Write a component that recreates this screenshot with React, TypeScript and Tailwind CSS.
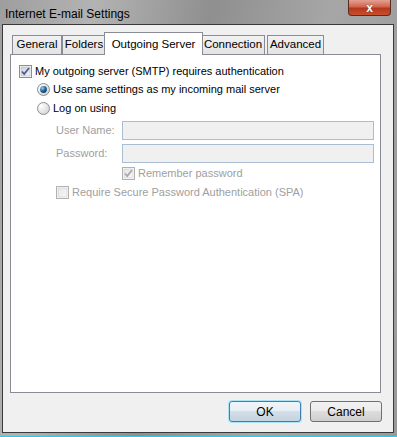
import React from 'react';

const font = { fontFamily: '"Liberation Sans", Arial, sans-serif' };

const CheckBox: React.FC<{ checked?: boolean; disabled?: boolean }> = ({ checked, disabled }) => (
    <svg width="13" height="13" viewBox="0 0 13 13" className="shrink-0">
        <defs>
            <linearGradient id={disabled ? 'cbd' : 'cbe'} x1="0" y1="0" x2="1" y2="1">
                <stop offset="0" stopColor={disabled ? '#e6e6e6' : '#cbcfd5'} />
                <stop offset="1" stopColor={disabled ? '#f7f7f7' : '#f6f6f6'} />
            </linearGradient>
        </defs>
        <rect x="0.5" y="0.5" width="12" height="12" fill="#fff" stroke={disabled ? '#b1b1b1' : '#8e8f8f'} />
        <rect x="2" y="2" width="9" height="9" fill={`url(#${disabled ? 'cbd' : 'cbe'})`} stroke={disabled ? '#c8c8c8' : '#aeb3b9'} strokeWidth="0.6" />
        {checked && (
            <path d="M3 6.5 L5.2 9 L10 3" fill="none" stroke={disabled ? '#a8a8a8' : '#4a5f97'} strokeWidth="1.8" />
        )}
    </svg>
);

const Radio: React.FC<{ checked?: boolean }> = ({ checked }) => (
    <svg width="13" height="13" viewBox="0 0 13 13" className="shrink-0">
        <defs>
            <radialGradient id="rbg" cx="0.3" cy="0.3" r="0.9">
                <stop offset="0" stopColor="#ffffff" />
                <stop offset="1" stopColor="#c9cdd2" />
            </radialGradient>
            <radialGradient id="rdot" cx="0.35" cy="0.3" r="0.8">
                <stop offset="0" stopColor="#8fd0f3" />
                <stop offset="0.6" stopColor="#1b5a8f" />
                <stop offset="1" stopColor="#0b3a63" />
            </radialGradient>
        </defs>
        <circle cx="6.5" cy="6.5" r="6" fill="url(#rbg)" stroke="#8f8f8f" />
        {checked && <circle cx="6.5" cy="6.5" r="3.4" fill="url(#rdot)" />}
    </svg>
);

const Tab: React.FC<{ label: string; w: string; selected?: boolean }> = ({ label, w, selected }) =>
    selected ? (
        <div className={`${w} -mx-[2px] h-[23px] -mb-px relative z-10 bg-white border border-b-0 border-[#898c95] flex items-start justify-center pt-[3px] text-[11.5px] text-black`}>
            {label}
        </div>
    ) : (
        <div className={`${w} h-[19px] border border-b-0 border-[#898c95] bg-[linear-gradient(#f2f2f2,#e3e3e3)] flex items-center justify-center text-[11.5px] text-black`}>
            {label}
        </div>
    );

const App: React.FC = () => {
    return (
        <div
            className="w-[397px] h-[437px] flex flex-col bg-[linear-gradient(100deg,#9e9e9e_0%,#b3b3b3_20%,#8f8f8f_45%,#a6a6a6_70%,#9a9a9a_100%)] border-b border-[#35c6e9]"
            style={font}
        >
            <div className="h-[24px] flex items-start justify-between shrink-0">
                <div className="pl-[5px] pt-[5px] text-[12px] text-black">Internet E-mail Settings</div>
                <div className="mr-[6px] w-[43px] h-[16px] rounded-b-[4px] border border-t-0 border-[#5a2a22] bg-[linear-gradient(#e5a093_0%,#d0654e_45%,#b8361c_55%,#c8502f_100%)] flex items-center justify-center">
                    <span className="text-[12px] font-bold text-white leading-none [text-shadow:0_0_1px_#333]">x</span>
                </div>
            </div>
            <div className="flex-1 ml-[2px] mr-[3px] mb-[3px] border border-[#3a3a3a] bg-[#f0f0f0] flex flex-col px-[7px] pt-[9px] pb-[10px]">
                <div className="flex items-end pl-[2px] h-[20px]">
                    <Tab label="General" w="w-[50px]" />
                    <Tab label="Folders" w="w-[44px]" />
                    <Tab label="Outgoing Server" w="w-[99px]" selected />
                    <Tab label="Connection" w="w-[64px]" />
                    <div className="w-[2px]" />
                    <Tab label="Advanced" w="w-[57px]" />
                </div>
                <div className="w-[371px] h-[339px] border border-[#898c95] bg-white flex flex-col text-[11px] text-black">
                    <div className="h-[18px] mt-[7px] pl-[8px] flex items-center gap-[3px]">
                        <CheckBox checked />
                        <span>My outgoing server (SMTP) requires authentication</span>
                    </div>
                    <div className="h-[18px] pl-[26px] flex items-center gap-[3px]">
                        <Radio checked />
                        <span>Use same settings as my incoming mail server</span>
                    </div>
                    <div className="h-[18px] mt-[1px] pl-[26px] flex items-center gap-[3px]">
                        <Radio />
                        <span>Log on using</span>
                    </div>
                    <div className="h-[20px] mt-[3px] pl-[45px] flex items-center text-[#a0a0a0]">
                        <span className="w-[66px]">User Name:</span>
                        <div className="w-[252px] h-[19px] border border-[#a9bdd3] bg-[#f0f0f0]" />
                    </div>
                    <div className="h-[20px] mt-[3px] pl-[45px] flex items-center text-[#a0a0a0]">
                        <span className="w-[66px]">Password:</span>
                        <div className="w-[252px] h-[19px] border border-[#a9bdd3] bg-[#f0f0f0]" />
                    </div>
                    <div className="h-[18px] mt-[1px] pl-[111px] flex items-center gap-[3px] text-[#a0a0a0]">
                        <CheckBox checked disabled />
                        <span>Remember password</span>
                    </div>
                    <div className="h-[18px] mt-[1px] pl-[45px] flex items-center gap-[3px] text-[#a0a0a0]">
                        <CheckBox disabled />
                        <span>Require Secure Password Authentication (SPA)</span>
                    </div>
                </div>
                <div className="flex justify-end gap-[9px] mt-[8px] pr-[4px]">
                    <button className="w-[72px] h-[21px] rounded-[3px] border border-[#3c7fb1] shadow-[0_0_0_1px_#a8e3f7] bg-[linear-gradient(#f0f5f9_0%,#e6eef5_50%,#d3dfe9_50%,#c5d3df_100%)] text-[12px] text-black">
                        OK
                    </button>
                    <button className="w-[72px] h-[21px] rounded-[3px] border border-[#707070] bg-[linear-gradient(#f2f2f2_0%,#ebebeb_50%,#dddddd_50%,#cfcfcf_100%)] text-[12px] text-black">
                        Cancel
                    </button>
                </div>
            </div>
        </div>
    );
};

export default App;
